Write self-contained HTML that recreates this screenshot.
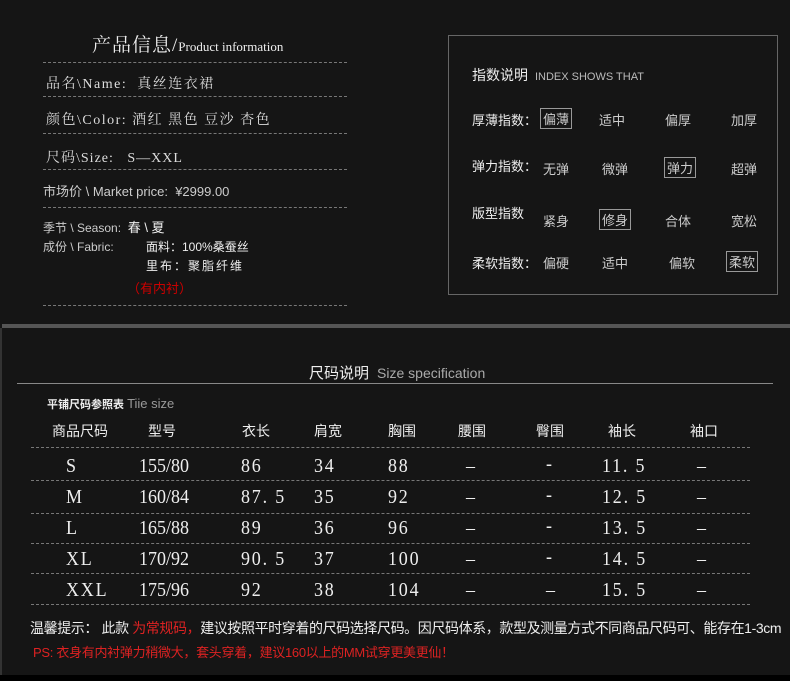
<!DOCTYPE html>
<html><head><meta charset="utf-8"><style>
*{margin:0;padding:0;box-sizing:border-box}
body{width:790px;height:681px;background:#151515;position:relative;overflow:hidden;font-family:"Liberation Sans","Noto Sans CJK SC",sans-serif;color:#ddd}
.a{position:absolute;white-space:nowrap}
.s{font-family:"Liberation Serif","Noto Serif CJK SC",serif}
.dl{position:absolute;left:43px;width:304px;border-top:1px dashed #777}
.td{position:absolute;left:31px;width:719px;border-top:1px dashed #777}
.bx{border:1px solid #999;padding:0 2px}
.v{position:absolute;font-family:"Liberation Serif","Noto Serif CJK SC",serif;font-size:20px;color:#eee;letter-spacing:2px;transform:scaleX(.9);transform-origin:left}
</style></head><body>
<div class="a s" style="left:92px;top:30px;font-size:19px;color:#eee;letter-spacing:1px">产品信息/<span style="font-size:13px;letter-spacing:0">Product information</span></div>
<div class="dl" style="top:62px"></div>
<div class="a s" style="left:46px;top:73px;font-size:14px;letter-spacing:1.5px">品名\Name: &nbsp;真丝连衣裙</div>
<div class="dl" style="top:96px"></div>
<div class="a s" style="left:46px;top:109px;font-size:14px;letter-spacing:1.5px">颜色\Color: 酒红 黑色 豆沙 杏色</div>
<div class="dl" style="top:133px"></div>
<div class="a s" style="left:46px;top:147px;font-size:14px;letter-spacing:1px">尺码\Size: &nbsp; S—XXL</div>
<div class="dl" style="top:169px"></div>
<div class="a" style="left:43px;top:181px;font-size:13px;color:#ccc">市场价 \ Market price: &nbsp;¥2999.00</div>
<div class="dl" style="top:207px"></div>
<div class="a" style="left:43px;top:217px;font-size:12px;color:#ccc">季节 \ Season: &nbsp;<span style="color:#eee;font-size:13px">春 \ 夏</span></div>
<div class="a" style="left:43px;top:238px;font-size:12px;color:#ccc">成份 \ Fabric:</div>
<div class="a" style="left:146px;top:238px;font-size:12px;color:#eee">面料：100%桑蚕丝</div>
<div class="a" style="left:146px;top:257px;font-size:12px;color:#eee;letter-spacing:2px">里布：聚脂纤维</div>
<div class="a" style="left:127px;top:278px;font-size:13px;color:#c00">（有内衬）</div>
<div class="dl" style="top:305px"></div>

<div class="a" style="left:448px;top:35px;width:330px;height:260px;border:1px solid #666"></div>
<div class="a" style="left:472px;top:65px;font-size:14px;color:#eee">指数说明 <span style="font-size:11px;color:#bbb">&nbsp;INDEX SHOWS THAT</span></div>
<div style="font-size:13px;color:#ccc">
<div class="a" style="left:472px;top:110px;color:#eee">厚薄指数：</div>
<div class="a bx" style="left:540px;top:108px">偏薄</div><div class="a" style="left:599px;top:110px">适中</div><div class="a" style="left:665px;top:110px">偏厚</div><div class="a" style="left:731px;top:110px">加厚</div>
<div class="a" style="left:472px;top:156px;color:#eee">弹力指数：</div>
<div class="a" style="left:543px;top:159px">无弹</div><div class="a" style="left:602px;top:159px">微弹</div><div class="a bx" style="left:664px;top:157px">弹力</div><div class="a" style="left:731px;top:159px">超弹</div>
<div class="a" style="left:472px;top:203px;color:#eee">版型指数</div>
<div class="a" style="left:543px;top:211px">紧身</div><div class="a bx" style="left:599px;top:209px">修身</div><div class="a" style="left:665px;top:211px">合体</div><div class="a" style="left:731px;top:211px">宽松</div>
<div class="a" style="left:472px;top:253px;color:#eee">柔软指数：</div>
<div class="a" style="left:543px;top:253px">偏硬</div><div class="a" style="left:602px;top:253px">适中</div><div class="a" style="left:669px;top:253px">偏软</div><div class="a bx" style="left:726px;top:251px">柔软</div>
</div>

<div class="a" style="left:2px;top:324px;width:788px;height:4px;background:#555"></div>
<div class="a" style="left:0;top:328px;width:2px;height:347px;background:#333"></div>
<div class="a" style="left:309px;top:362px;font-size:15px;color:#eee">尺码说明 <span style="font-size:14px;color:#aaa">&nbsp;Size specification</span></div>
<div class="a" style="left:17px;top:383px;width:756px;border-top:1px solid #888"></div>
<div class="a" style="left:47px;top:396px;font-size:11px;color:#eee;font-weight:bold">平铺尺码参照表 <span style="font-size:13px;color:#999;font-weight:normal">Tiie size</span></div>
<div style="font-size:14px;color:#eee">
<div class="a" style="left:52px;top:421px">商品尺码</div><div class="a" style="left:148px;top:421px">型号</div><div class="a" style="left:242px;top:421px">衣长</div><div class="a" style="left:314px;top:421px">肩宽</div><div class="a" style="left:388px;top:421px">胸围</div><div class="a" style="left:458px;top:421px">腰围</div><div class="a" style="left:536px;top:421px">臀围</div><div class="a" style="left:608px;top:421px">袖长</div><div class="a" style="left:690px;top:421px">袖口</div>
</div>
<div class="td" style="top:447px"></div><div class="td" style="top:480px"></div><div class="td" style="top:513px"></div><div class="td" style="top:543px"></div><div class="td" style="top:573px"></div><div class="td" style="top:604px"></div>

<div class="v" style="left:66px;top:455px">S</div><div class="v" style="left:139px;top:455px;letter-spacing:0">155/80</div><div class="v" style="left:241px;top:455px">86</div><div class="v" style="left:314px;top:455px">34</div><div class="v" style="left:388px;top:455px">88</div><div class="v" style="left:466px;top:455px">–</div><div class="v" style="left:546px;top:453px">-</div><div class="v" style="left:602px;top:455px">11. 5</div><div class="v" style="left:697px;top:455px">–</div>
<div class="v" style="left:66px;top:486px">M</div><div class="v" style="left:139px;top:486px;letter-spacing:0">160/84</div><div class="v" style="left:241px;top:486px">87. 5</div><div class="v" style="left:314px;top:486px">35</div><div class="v" style="left:388px;top:486px">92</div><div class="v" style="left:466px;top:486px">–</div><div class="v" style="left:546px;top:484px">-</div><div class="v" style="left:602px;top:486px">12. 5</div><div class="v" style="left:697px;top:486px">–</div>
<div class="v" style="left:66px;top:517px">L</div><div class="v" style="left:139px;top:517px;letter-spacing:0">165/88</div><div class="v" style="left:241px;top:517px">89</div><div class="v" style="left:314px;top:517px">36</div><div class="v" style="left:388px;top:517px">96</div><div class="v" style="left:466px;top:517px">–</div><div class="v" style="left:546px;top:515px">-</div><div class="v" style="left:602px;top:517px">13. 5</div><div class="v" style="left:697px;top:517px">–</div>
<div class="v" style="left:66px;top:548px">XL</div><div class="v" style="left:139px;top:548px;letter-spacing:0">170/92</div><div class="v" style="left:241px;top:548px">90. 5</div><div class="v" style="left:314px;top:548px">37</div><div class="v" style="left:388px;top:548px">100</div><div class="v" style="left:466px;top:548px">–</div><div class="v" style="left:546px;top:546px">-</div><div class="v" style="left:602px;top:548px">14. 5</div><div class="v" style="left:697px;top:548px">–</div>
<div class="v" style="left:66px;top:579px">XXL</div><div class="v" style="left:139px;top:579px;letter-spacing:0">175/96</div><div class="v" style="left:241px;top:579px">92</div><div class="v" style="left:314px;top:579px">38</div><div class="v" style="left:388px;top:579px">104</div><div class="v" style="left:466px;top:579px">–</div><div class="v" style="left:546px;top:579px">–</div><div class="v" style="left:602px;top:579px">15. 5</div><div class="v" style="left:697px;top:579px">–</div>

<div class="a" style="left:30px;top:618px;font-size:14px;color:#eee;letter-spacing:-0.4px">温馨提示： 此款 <span style="color:#d22">为常规码，</span>建议按照平时穿着的尺码选择尺码。因尺码体系，款型及测量方式不同商品尺码可、能存在1-3cm</div>
<div class="a" style="left:33px;top:642px;font-size:13px;color:#d22;letter-spacing:-0.3px">PS: 衣身有内衬弹力稍微大，套头穿着，建议160以上的MM试穿更美更仙！</div>
<div class="a" style="left:0;top:675px;width:790px;height:6px;background:#000"></div>
</body></html>
